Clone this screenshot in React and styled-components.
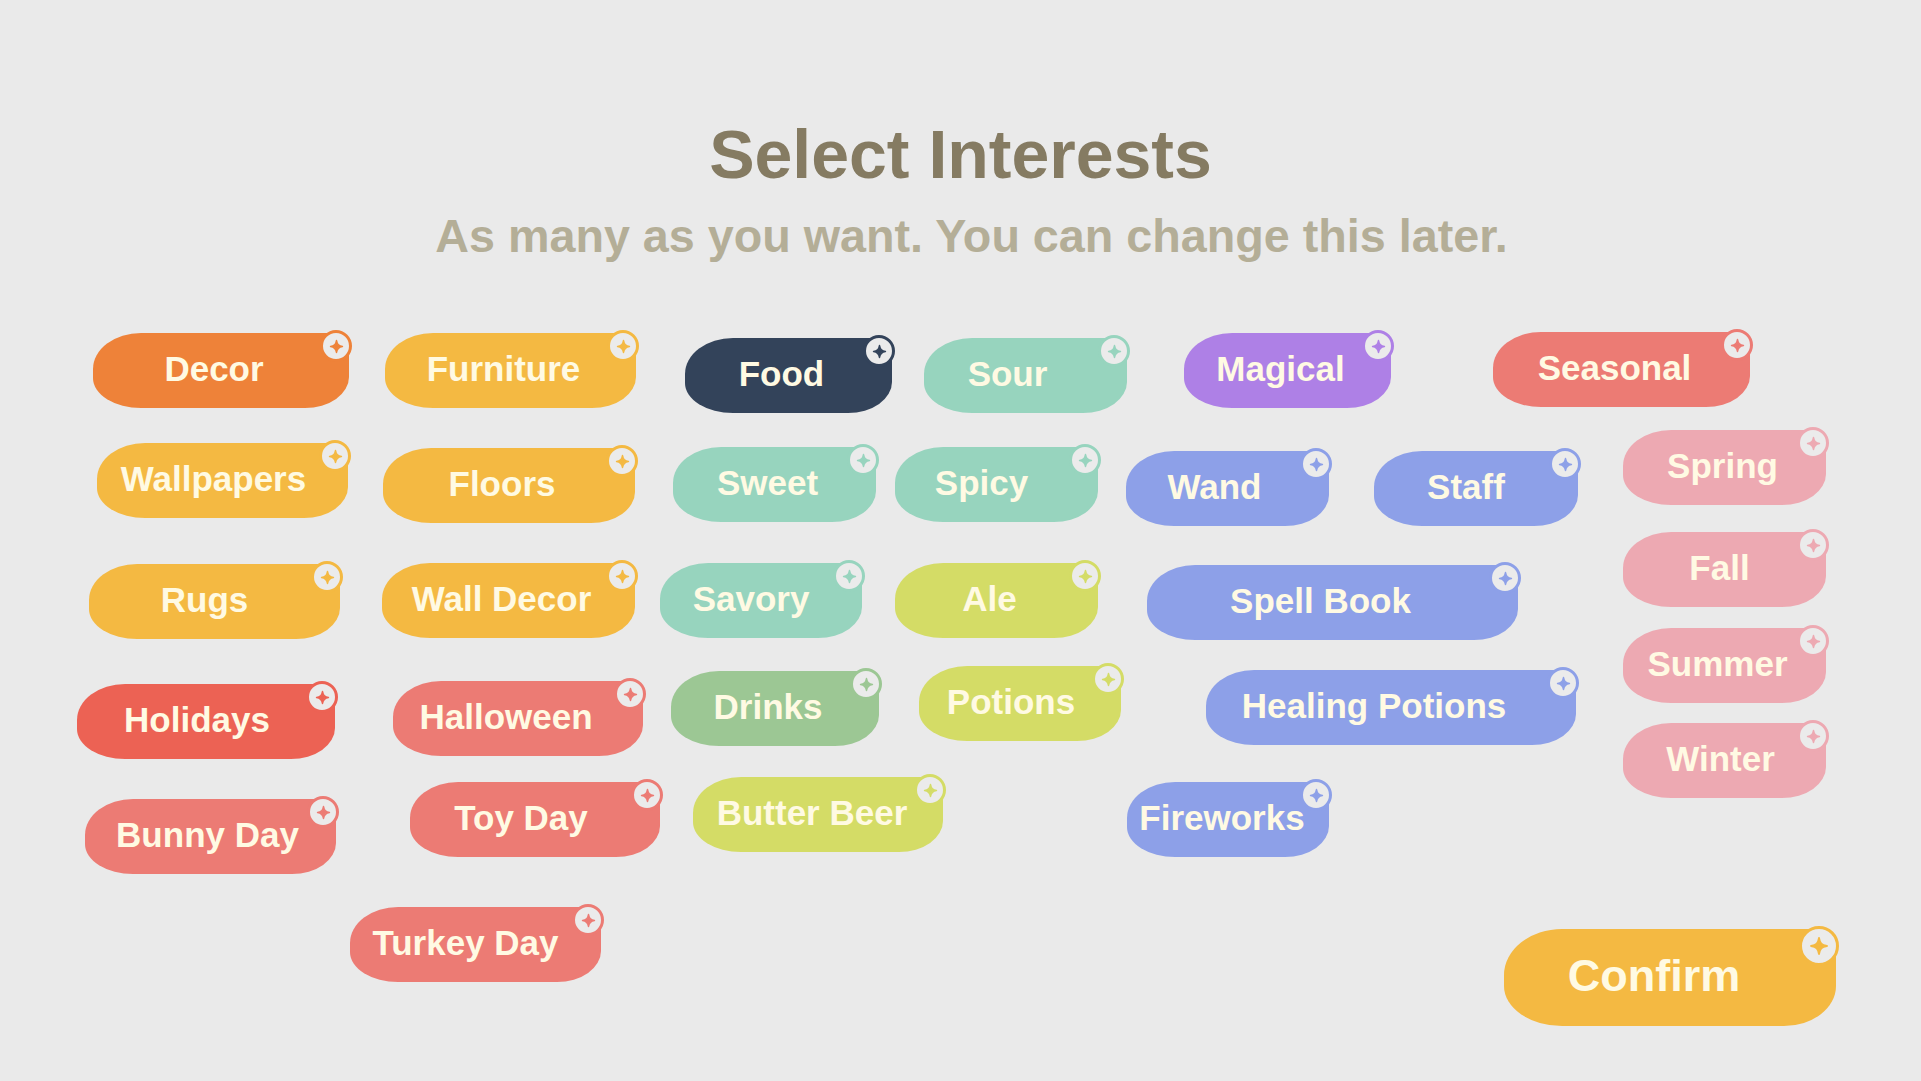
import React from 'react';
import styled, { createGlobalStyle } from 'styled-components';

const GlobalStyle = createGlobalStyle`
  html, body {
    margin: 0;
    padding: 0;
    background: #eaeaea;
  }
  body {
    font-family: "Liberation Sans", Arial, sans-serif;
  }
`;

const colors = {
  orange: '#ee8239',
  yellow: '#f4b942',
  navy: '#33435a',
  mint: '#97d4be',
  purple: '#ae80e6',
  salmon: '#ec7b74',
  red: '#ec6254',
  pink: '#eda9b2',
  blue: '#8da0e8',
  lime: '#d4dc66',
  green: '#9cc794',
};

// each row: its height, then chips with width, left gap, top offset and text shift
const rows = [
  {
    h: 98,
    chips: [
      { label: 'Decor', c: 'orange', w: 256, ml: 93, mt: 1 },
      { label: 'Furniture', c: 'yellow', w: 251, ml: 36, mt: 1 },
      { label: 'Food', c: 'navy', w: 207, ml: 49, mt: 6 },
      { label: 'Sour', c: 'mint', w: 203, ml: 32, mt: 6, tx: -18 },
      { label: 'Magical', c: 'purple', w: 207, ml: 57, mt: 1 },
      { label: 'Seasonal', c: 'salmon', w: 257, ml: 102, mt: 0 },
    ],
  },
  {
    h: 102,
    chips: [
      { label: 'Wallpapers', c: 'yellow', w: 251, ml: 97, mt: 13, tx: -9 },
      { label: 'Floors', c: 'yellow', w: 252, ml: 35, mt: 18 },
      { label: 'Sweet', c: 'mint', w: 203, ml: 38, mt: 17 },
      { label: 'Spicy', c: 'mint', w: 203, ml: 19, mt: 17, tx: -15 },
      { label: 'Wand', c: 'blue', w: 203, ml: 28, mt: 21, tx: -13 },
      { label: 'Staff', c: 'blue', w: 204, ml: 45, mt: 21, tx: -10 },
      { label: 'Spring', c: 'pink', w: 203, ml: 45, mt: 0, tx: -2 },
    ],
  },
  {
    h: 96,
    chips: [
      { label: 'Rugs', c: 'yellow', w: 251, ml: 89, mt: 32, tx: -10 },
      { label: 'Wall Decor', c: 'yellow', w: 253, ml: 42, mt: 31 },
      { label: 'Savory', c: 'mint', w: 202, ml: 25, mt: 31, tx: -10 },
      { label: 'Ale', c: 'lime', w: 203, ml: 33, mt: 31 },
      { label: 'Spell Book', c: 'blue', w: 371, ml: 49, mt: 33, tx: -12 },
      { label: 'Fall', c: 'pink', w: 203, ml: 105, mt: 0, tx: -5 },
    ],
  },
  {
    h: 95,
    chips: [
      { label: 'Holidays', c: 'red', w: 258, ml: 77, mt: 56, tx: -9 },
      { label: 'Halloween', c: 'salmon', w: 250, ml: 58, mt: 53, tx: -12 },
      { label: 'Drinks', c: 'green', w: 208, ml: 28, mt: 43 },
      { label: 'Potions', c: 'lime', w: 202, ml: 40, mt: 38, tx: -9 },
      { label: 'Healing Potions', c: 'blue', w: 370, ml: 85, mt: 42, tx: -17 },
      { label: 'Summer', c: 'pink', w: 203, ml: 47, mt: 0, tx: -7 },
    ],
  },
  {
    h: 184,
    chips: [
      { label: 'Bunny Day', c: 'salmon', w: 251, ml: 85, mt: 76, tx: -3 },
      { label: 'Toy Day', c: 'salmon', w: 250, ml: 74, mt: 59, tx: -14 },
      { label: 'Butter Beer', c: 'lime', w: 250, ml: 33, mt: 54, tx: -6 },
      { label: 'Fireworks', c: 'blue', w: 202, ml: 184, mt: 59, tx: -6 },
      { label: 'Winter', c: 'pink', w: 203, ml: 294, mt: 0, tx: -4 },
    ],
  },
];

const Page = styled.div`
  min-height: 1081px;
  padding-top: 120px;
  box-sizing: border-box;
  background: #eaeaea;
`;

const Title = styled.h1`
  margin: 0;
  font-size: 68px;
  line-height: 68px;
  font-weight: 700;
  color: #857b62;
  text-align: center;
`;

const Subtitle = styled.p`
  margin: 25px 0 0;
  padding-left: 22px;
  font-size: 46.7px;
  line-height: 46px;
  font-weight: 700;
  color: #b4ae97;
  text-align: center;
`;

const Board = styled.div`
  margin-top: 73px;
  display: flex;
  flex-direction: column;
`;

const Row = styled.div`
  display: flex;
  align-items: flex-start;
  height: ${(p) => p.$h}px;
`;

const Chip = styled.button`
  position: relative;
  flex-shrink: 0;
  box-sizing: border-box;
  display: flex;
  align-items: center;
  justify-content: center;
  width: ${(p) => p.$w}px;
  height: 75px;
  margin-left: ${(p) => p.$ml}px;
  margin-top: ${(p) => p.$mt}px;
  padding: 0 ${(p) => Math.max(0, -2 * p.$tx)}px 4px ${(p) => Math.max(0, 2 * p.$tx)}px;
  border: none;
  border-radius: 48px 20px 44px 48px / 36px 20px 31px 30px;
  background: ${(p) => p.$bg};
  color: #fffae3;
  font-family: "Liberation Sans", Arial, sans-serif;
  font-size: 35px;
  font-weight: 700;
  line-height: 1;
  white-space: nowrap;
  cursor: pointer;
`;

const ConfirmButton = styled(Chip)`
  height: 97px;
  padding-bottom: 5px;
  font-size: 45px;
  border-radius: 58px 24px 52px 58px / 46px 24px 40px 40px;
`;

const Badge = styled.span`
  position: absolute;
  top: -3px;
  right: -3px;
  box-sizing: border-box;
  width: ${(p) => (p.$big ? 40 : 32)}px;
  height: ${(p) => (p.$big ? 40 : 32)}px;
  border-radius: 50%;
  border: ${(p) => (p.$big ? 3.5 : 3)}px solid ${(p) => p.$bg};
  background: #ebebeb;
  display: flex;
  align-items: center;
  justify-content: center;

  svg {
    width: ${(p) => (p.$big ? 20 : 15)}px;
    height: ${(p) => (p.$big ? 20 : 15)}px;
  }
`;

function Sparkle({ color }) {
  return (
    <svg viewBox="0 0 24 24">
      <path
        d="M12 2.5 C12.9 8.8 15.2 11.1 21.5 12 C15.2 12.9 12.9 15.2 12 21.5 C11.1 15.2 8.8 12.9 2.5 12 C8.8 11.1 11.1 8.8 12 2.5 Z"
        fill={color}
        stroke={color}
        strokeWidth="2.4"
        strokeLinejoin="round"
      />
    </svg>
  );
}

function Interest({ label, color, w, ml, mt, tx = -7 }) {
  return (
    <Chip $w={w} $ml={ml} $mt={mt} $tx={tx} $bg={color}>
      {label}
      <Badge $bg={color}>
        <Sparkle color={color} />
      </Badge>
    </Chip>
  );
}

export default function App() {
  return (
    <Page>
      <GlobalStyle />
      <Title>Select Interests</Title>
      <Subtitle>As many as you want. You can change this later.</Subtitle>
      <Board>
        {rows.map((row, i) => (
          <Row key={i} $h={row.h}>
            {row.chips.map((chip) => (
              <Interest
                key={chip.label}
                label={chip.label}
                color={colors[chip.c]}
                w={chip.w}
                ml={chip.ml}
                mt={chip.mt}
                tx={chip.tx}
              />
            ))}
          </Row>
        ))}
        <Row $h={150}>
          <Interest label="Turkey Day" color={colors.salmon} w={251} ml={350} mt={0} tx={-10} />
          <ConfirmButton $w={332} $ml={903} $mt={22} $tx={-16} $bg={colors.yellow}>
            Confirm
            <Badge $big $bg={colors.yellow}>
              <Sparkle color={colors.yellow} />
            </Badge>
          </ConfirmButton>
        </Row>
      </Board>
    </Page>
  );
}
